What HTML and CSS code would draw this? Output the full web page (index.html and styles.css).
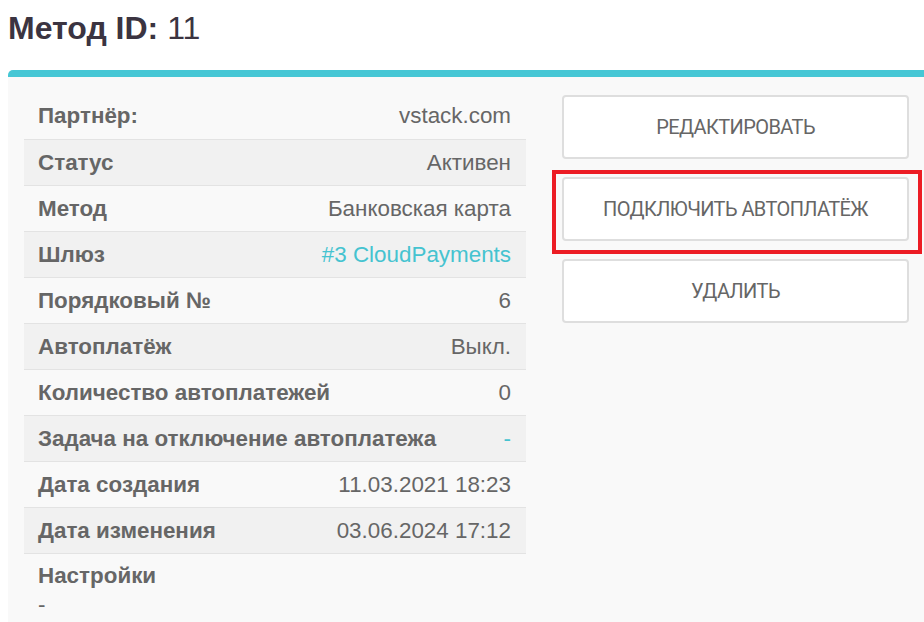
FILE: index.html
```html
<!DOCTYPE html>
<html lang="ru">
<head>
<meta charset="utf-8">
<link rel="stylesheet" href="styles.css">
</head>
<body>
<h1 class="title"><b>Метод ID:</b> 11</h1>
<div class="card">
  <div class="card-body">
    <div class="info">
      <div class="row"><span class="label">Партнёр:</span><span class="value">vstack.com</span></div>
      <div class="row"><span class="label">Статус</span><span class="value">Активен</span></div>
      <div class="row"><span class="label">Метод</span><span class="value">Банковская карта</span></div>
      <div class="row"><span class="label">Шлюз</span><a class="value link">#3 CloudPayments</a></div>
      <div class="row"><span class="label">Порядковый №</span><span class="value">6</span></div>
      <div class="row"><span class="label">Автоплатёж</span><span class="value">Выкл.</span></div>
      <div class="row"><span class="label">Количество автоплатежей</span><span class="value">0</span></div>
      <div class="row"><span class="label">Задача на отключение автоплатежа</span><a class="value link">-</a></div>
      <div class="row"><span class="label">Дата создания</span><span class="value">11.03.2021 18:23</span></div>
      <div class="row"><span class="label">Дата изменения</span><span class="value">03.06.2024 17:12</span></div>
      <div class="row settings"><span class="label">Настройки</span><span class="dash">-</span></div>
    </div>
    <div class="actions">
      <button class="btn">Редактировать</button>
      <div class="highlight-wrap">
        <button class="btn">Подключить автоплатёж</button>
        <span class="highlight"></span>
      </div>
      <button class="btn">Удалить</button>
    </div>
  </div>
</div>
</body>
</html>
```
FILE: styles.css
```css
html, body { margin: 0; padding: 0; overflow: hidden; background: #fff; }
body { width: 924px; height: 622px; font-family: "Liberation Sans", Arial, sans-serif; }
.title {
  margin: 0;
  padding: 10px 0 0 8px;
  height: 70px;
  box-sizing: border-box;
  font-size: 32px;
  line-height: 36px;
  font-weight: normal;
  color: #3b3441;
}
.title b { font-weight: bold; }
.card {
  margin-left: 8px;
  width: 940px;
  border-top: 7px solid #46c7d5;
  border-radius: 5px 5px 0 0;
  background: #f9f9f9;
  height: 545px;
}
.card-body {
  display: flex;
  align-items: flex-start;
  padding: 16px 0 0 16px;
}
.info {
  width: 502px;
  color: #666;
  font-size: 22.4px;
}
.row {
  display: flex;
  justify-content: space-between;
  align-items: center;
  height: 46px;
  padding: 0 15px 0 14px;
  box-sizing: border-box;
  white-space: nowrap;
}
.row + .row { border-top: 1px solid #e3e3e3; }
.row:nth-child(even) { background: #f1f1f1; }
.label { font-weight: bold; }
.link { color: #45c3d0; text-decoration: none; }
.row.settings {
  height: auto;
  flex-direction: column;
  align-items: flex-start;
  padding-top: 9px;
}
.dash { margin-top: 3px; }
.actions {
  margin-left: 36px;
  width: 347px;
  display: flex;
  flex-direction: column;
  gap: 18px;
  padding-top: 2px;
}
.btn {
  display: block;
  width: 100%;
  height: 64px;
  background: #fff;
  border: 2px solid #dedede;
  border-radius: 4px;
  font-family: "Roboto", "Liberation Sans", sans-serif;
  font-size: 20px;
  font-weight: 400;
  letter-spacing: -0.6px;
  text-transform: uppercase;
  color: #666;
  padding: 0;
}
.highlight-wrap { position: relative; }
.highlight {
  position: absolute;
  top: -7px; left: -10px; right: -13px; bottom: -13px;
  border: 4px solid #ec1c24;
  pointer-events: none;
}
```
